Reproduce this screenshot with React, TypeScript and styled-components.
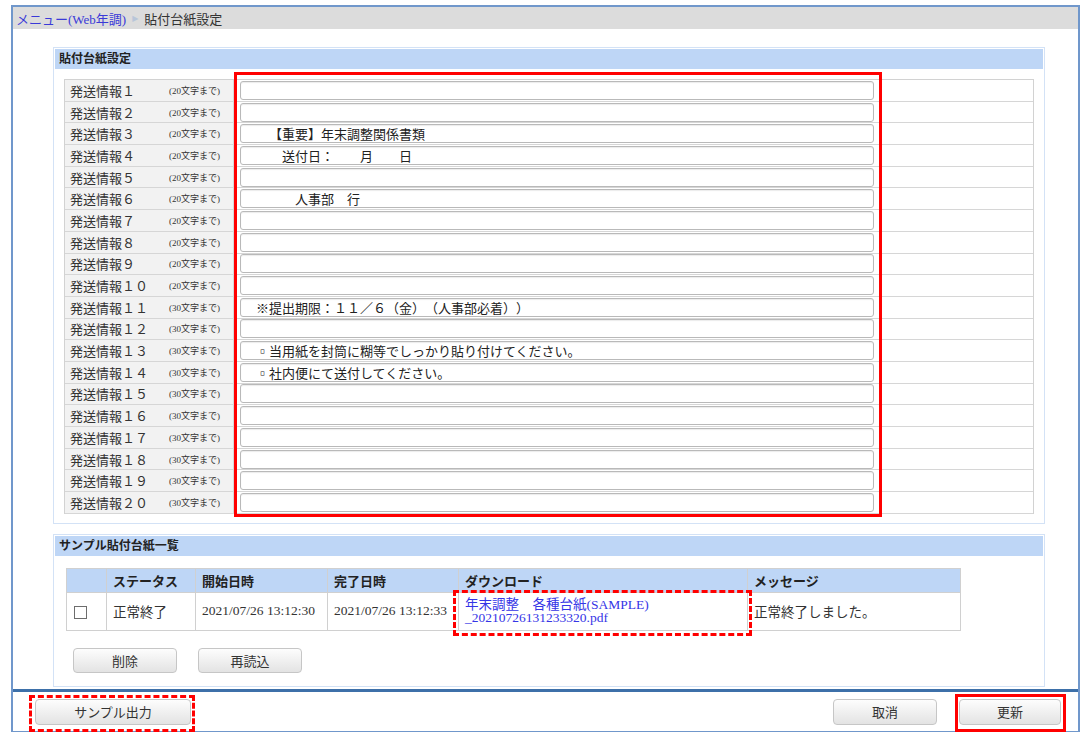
import styled, { createGlobalStyle, css } from 'styled-components'

const GlobalStyle = createGlobalStyle`
  html, body {
    margin: 0;
    padding: 0;
    background: #fff;
  }
  body {
    font-family: "Liberation Serif", "Noto Sans CJK JP", serif;
    font-size: 13px;
    color: #333;
  }
  * {
    text-spacing-trim: space-all;
  }
`

const Frame = styled.div`
  margin: 5px 0 0 11px;
  width: 1069px;
  box-sizing: border-box;
  border: 2px solid #7097cb;
`

const Breadcrumb = styled.div`
  display: flex;
  align-items: center;
  gap: 6px;
  height: 22px;
  padding-left: 3px;
  background: #dcdcdc;
`

const CrumbLink = styled.a`
  color: #3a3ad8;
  text-decoration: none;
`

const CrumbArrow = styled.span`
  color: #b8c6d9;
  font-size: 8px;
  font-family: "DejaVu Sans", sans-serif;
`

const CrumbCurrent = styled.span`
  color: #333;
  font-family: "Noto Sans CJK JP", sans-serif;
`

const Content = styled.div`
  display: flex;
  flex-direction: column;
  gap: 10px;
  padding: 18px 33px 2px 40px;
`

const Panel = styled.section`
  border: 1px solid #d3e2f6;
  padding: 1px;
`

const PanelHeader = styled.h2`
  margin: 0;
  height: 20px;
  line-height: 20px;
  padding-left: 4px;
  background: #bed6f6;
  font: bold 12px "Noto Sans CJK JP", sans-serif;
  color: #222;
`

const PanelBody = styled.div<{ $pad: string }>`
  padding: ${p => p.$pad};
`

const InfoTable = styled.div`
  position: relative;
  border: 1px solid #d2d2d2;
  border-bottom: none;
`

const InfoRow = styled.div`
  display: grid;
  grid-template-columns: 169px 646px 1fr;
  height: 21.7px;
  box-sizing: border-box;
  border-bottom: 1px solid #d6d6d6;
`

const LabelCell = styled.div`
  display: flex;
  align-items: center;
  padding-left: 5px;
  background: #f2f2f2;
  border-right: 1px solid #d6d6d6;
`

const LabelName = styled.span`
  width: 99px;
  font-family: "Noto Sans CJK JP", sans-serif;
  color: #333;
`

const LabelNote = styled.span`
  font-size: 9px;
  color: #333;
`

const InputCell = styled.div`
  display: flex;
  align-items: center;
  padding: 0 5px 0 6px;
  border-right: 1px solid #d6d6d6;
`

const TextInput = styled.input`
  width: 100%;
  height: 19px;
  box-sizing: border-box;
  padding: 0 2px;
  border: 1px solid #b9b9b9;
  border-radius: 3px;
  box-shadow: inset 0 1px 1px rgba(0, 0, 0, 0.08);
  background: #fff;
  font: 13px "Noto Sans CJK JP", sans-serif;
  color: #222;
  outline: none;
  text-spacing-trim: space-all;
`

const ColumnMark = styled.div`
  position: absolute;
  left: 169px;
  top: -8px;
  width: 648px;
  height: 445px;
  box-sizing: border-box;
  border: 3px solid #f00;
  pointer-events: none;
`

const SampleTable = styled.table`
  width: 894px;
  border-collapse: collapse;
  table-layout: fixed;
`

const Th = styled.th`
  height: 23px;
  padding: 0 6px;
  border: 1px solid #d0d0d0;
  background: #bed6f6;
  text-align: left;
  font: bold 13px "Noto Sans CJK JP", sans-serif;
  color: #222;
`

const Td = styled.td<{ $marked?: boolean }>`
  position: relative;
  height: 37px;
  padding: 0 4px 0 6px;
  border: 1px solid #d0d0d0;
  font-size: 13.5px;
  color: #333;
  ${p =>
    p.$marked &&
    css`
      &::after {
        content: '';
        position: absolute;
        left: -6px;
        top: -3px;
        right: -5px;
        bottom: -6px;
        border: 3px dashed #f00;
        pointer-events: none;
      }
    `}
`

const Checkbox = styled.span`
  display: inline-block;
  width: 11px;
  height: 11px;
  margin-left: 1px;
  border: 1px solid #6d6d6d;
  background: #fff;
  vertical-align: middle;
`

const DownloadLink = styled.a`
  display: block;
  line-height: 13px;
  color: #3535e6;
  text-decoration: none;
`

const ButtonRow = styled.div`
  display: flex;
  gap: 21px;
  margin-top: 17px;
  padding-left: 7px;
`

const Button = styled.button<{ $width: number; $height?: number }>`
  width: ${p => p.$width}px;
  height: ${p => p.$height ?? 25}px;
  padding: 0;
  border: 1px solid #c6c6c6;
  border-radius: 4px;
  background: linear-gradient(#fdfdfd, #e3e3e3);
  font: 13px "Noto Sans CJK JP", sans-serif;
  color: #333;
`

const Footer = styled.div`
  display: flex;
  align-items: center;
  gap: 22px;
  padding: 7px 17px 6px 22px;
  border-top: 3px solid #3d70a9;
`

const Spacer = styled.div`
  flex: 1;
`

const Marked = styled.span<{ $dashed?: boolean; $inset: string }>`
  position: relative;
  display: inline-flex;
  &::after {
    content: '';
    position: absolute;
    inset: ${p => p.$inset};
    border: 3px ${p => (p.$dashed ? 'dashed' : 'solid')} #f00;
    pointer-events: none;
  }
`

const zen = (n: number) =>
  String(n)
    .split('')
    .map(d => String.fromCharCode(d.charCodeAt(0) + 0xfee0))
    .join('')

const values: Record<number, string> = {
  3: '　　【重要】年末調整関係書類',
  4: '　　　送付日：　　月　　日',
  6: '　　　　人事部　行',
  11: '　※提出期限：１１／６（金）（人事部必着））',
  13: '　▫当用紙を封筒に糊等でしっかり貼り付けてください。',
  14: '　▫社内便にて送付してください。',
}

const rows = Array.from({ length: 20 }, (_, i) => i + 1)

export default function App() {
  return (
    <>
      <GlobalStyle />
      <Frame>
        <Breadcrumb>
          <CrumbLink href="#">メニュー(Web年調)</CrumbLink>
          <CrumbArrow>▶</CrumbArrow>
          <CrumbCurrent>貼付台紙設定</CrumbCurrent>
        </Breadcrumb>

        <Content>
          <Panel>
            <PanelHeader>貼付台紙設定</PanelHeader>
            <PanelBody $pad="10px 9px 8px">
              <InfoTable>
                {rows.map(n => (
                  <InfoRow key={n}>
                    <LabelCell>
                      <LabelName>発送情報{zen(n)}</LabelName>
                      <LabelNote>({n <= 10 ? 20 : 30}文字まで)</LabelNote>
                    </LabelCell>
                    <InputCell>
                      <TextInput defaultValue={values[n] ?? ''} />
                    </InputCell>
                    <div />
                  </InfoRow>
                ))}
                <ColumnMark />
              </InfoTable>
            </PanelBody>
          </Panel>

          <Panel>
            <PanelHeader>サンプル貼付台紙一覧</PanelHeader>
            <PanelBody $pad="12px 12px 12px 11px">
              <SampleTable>
                <colgroup>
                  <col style={{ width: 40 }} />
                  <col style={{ width: 89 }} />
                  <col style={{ width: 132 }} />
                  <col style={{ width: 131 }} />
                  <col style={{ width: 289 }} />
                  <col style={{ width: 213 }} />
                </colgroup>
                <thead>
                  <tr>
                    <Th />
                    <Th>ステータス</Th>
                    <Th>開始日時</Th>
                    <Th>完了日時</Th>
                    <Th>ダウンロード</Th>
                    <Th>メッセージ</Th>
                  </tr>
                </thead>
                <tbody>
                  <tr>
                    <Td>
                      <Checkbox />
                    </Td>
                    <Td>正常終了</Td>
                    <Td>2021/07/26 13:12:30</Td>
                    <Td>2021/07/26 13:12:33</Td>
                    <Td $marked>
                      <DownloadLink href="#">
                        年末調整　各種台紙(SAMPLE)
                        <br />
                        _20210726131233320.pdf
                      </DownloadLink>
                    </Td>
                    <Td>正常終了しました。</Td>
                  </tr>
                </tbody>
              </SampleTable>
              <ButtonRow>
                <Button $width={104}>削除</Button>
                <Button $width={104}>再読込</Button>
              </ButtonRow>
            </PanelBody>
          </Panel>
        </Content>

        <Footer>
          <Marked $dashed $inset="-4px -4px -7px -6px">
            <Button $width={156} $height={26}>
              サンプル出力
            </Button>
          </Marked>
          <Spacer />
          <Button $width={104} $height={26}>
            取消
          </Button>
          <Marked $inset="-5px -5px -7px -4px">
            <Button $width={102} $height={26}>
              更新
            </Button>
          </Marked>
        </Footer>
      </Frame>
    </>
  )
}
